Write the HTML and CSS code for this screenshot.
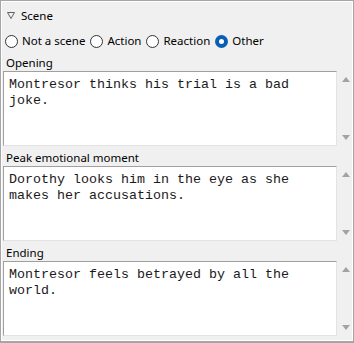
FILE: index.html
```html
<!DOCTYPE html>
<html>
<head>
<meta charset="utf-8">
<link rel="stylesheet" href="styles.css">
</head>
<body>
<div class="frame">
  <div class="inner">
    <div class="header">
      <svg class="tri" width="8" height="7" viewBox="0 0 8 7"><path d="M0.5 0.5 L7.5 0.5 L4 6.5 Z" fill="none" stroke="#606060" stroke-width="1"/></svg>
      <span>Scene</span>
    </div>
    <div class="radios">
      <span class="radio"></span><span class="rlabel">Not a scene</span>
      <span class="radio"></span><span class="rlabel">Action</span>
      <span class="radio"></span><span class="rlabel">Reaction</span>
      <span class="radio checked"></span><span class="rlabel">Other</span>
    </div>
    <div class="group">
      <div class="label">Opening</div>
      <div class="field">
        <div class="box">Montresor thinks his trial is a bad joke.</div>
        <div class="scroll"><span class="up"></span><span class="down"></span></div>
      </div>
    </div>
    <div class="group g2">
      <div class="label">Peak emotional moment</div>
      <div class="field">
        <div class="box">Dorothy looks him in the eye as she makes her accusations.</div>
        <div class="scroll"><span class="up"></span><span class="down"></span></div>
      </div>
    </div>
    <div class="group g2">
      <div class="label">Ending</div>
      <div class="field">
        <div class="box">Montresor feels betrayed by all the world.</div>
        <div class="scroll"><span class="up"></span><span class="down"></span></div>
      </div>
    </div>
  </div>
</div>
</body>
</html>
```
FILE: styles.css
```css
html, body {
  margin: 0;
  padding: 0;
  background: #f0f0f0;
}
.frame {
  width: 354px;
  height: 343px;
  box-sizing: border-box;
  border: 1px solid #a6a6a6;
  border-bottom-width: 2px;
  background: #f0f0f0;
}
.inner {
  height: 100%;
  box-sizing: border-box;
  border: 1px solid #ffffff;
  padding-left: 1px;
  font-family: "Noto Sans", "DejaVu Sans", sans-serif;
  font-size: 11.5px;
  color: #000;
}
.header {
  height: 26px;
  display: flex;
  align-items: center;
  padding-left: 4px;
}
.tri {
  display: block;
  margin-right: 6px;
  margin-top: 1px;
}
.radios {
  height: 26px;
  display: flex;
  align-items: center;
  padding-left: 2px;
}
.radio {
  width: 13px;
  height: 13px;
  box-sizing: border-box;
  border: 1px solid #333;
  border-radius: 50%;
  background: #fff;
  margin-right: 4px;
}
.radio.checked {
  border: 4px solid #0a5fb4;
  background: #fff;
}
.rlabel {
  margin-right: 5px;
  line-height: 16px;
}
.label {
  height: 17px;
  line-height: 17px;
  padding-left: 3px;
}
.g2 {
  margin-top: 3px;
}
.field {
  display: flex;
  height: 75px;
}
.box {
  width: 334px;
  box-sizing: border-box;
  border: 1px solid;
  border-color: #a0a0a0 #e3e3e3 #e3e3e3 #a0a0a0;
  background: #fff;
  padding: 5px 4px 0 5px;
  font-family: "Liberation Mono", "Courier New", monospace;
  font-size: 13.33px;
  line-height: 16px;
  color: #1a1a1a;
}
.scroll {
  width: 15px;
  display: flex;
  flex-direction: column;
  justify-content: space-between;
  align-items: center;
  padding: 6px 0 6px 0;
}
.up {
  width: 0;
  height: 0;
  border-left: 4.5px solid transparent;
  border-right: 4.5px solid transparent;
  border-bottom: 5px solid #a3a3a3;
  margin-left: 2px;
}
.down {
  width: 0;
  height: 0;
  border-left: 4.5px solid transparent;
  border-right: 4.5px solid transparent;
  border-top: 5px solid #a3a3a3;
  margin-left: 2px;
}
```
